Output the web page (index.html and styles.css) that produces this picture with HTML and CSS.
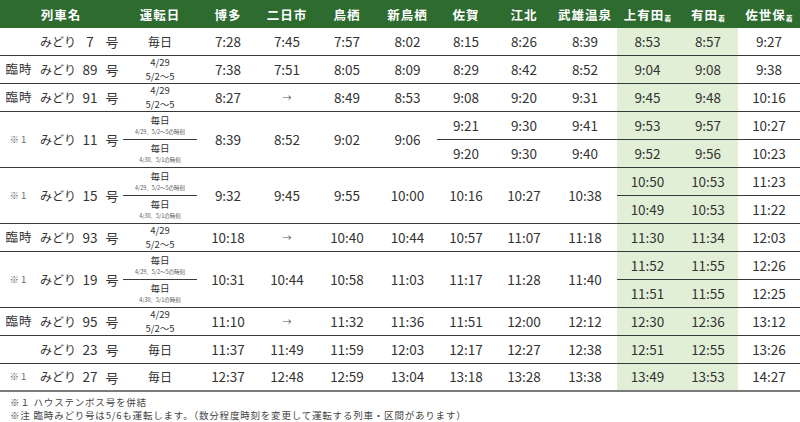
FILE: index.html
```html
<!DOCTYPE html>
<html lang="ja">
<head>
<meta charset="utf-8">
<title>みどり号 時刻表</title>
<link rel="stylesheet" href="styles.css">
</head>
<body>
<div class="tt">
  <div class="h">列車名</div>
  <div class="h">運転日</div>
  <div class="h">博多</div>
  <div class="h">二日市</div>
  <div class="h">鳥栖</div>
  <div class="h">新鳥栖</div>
  <div class="h">佐賀</div>
  <div class="h">江北</div>
  <div class="h">武雄温泉</div>
  <div class="h">上有田<small>着</small></div>
  <div class="h">有田<small>着</small></div>
  <div class="h">佐世保<small>着</small></div>

  <!-- 7 -->
  <div class="c nm"><span class="pf"></span><span class="md">みどり</span><span class="no">7</span><span class="go">号</span></div>
  <div class="c day">毎日</div>
  <div class="c">7:28</div><div class="c">7:45</div><div class="c">7:57</div><div class="c">8:02</div><div class="c">8:15</div><div class="c">8:26</div><div class="c">8:39</div><div class="c g">8:53</div><div class="c g">8:57</div><div class="c">9:27</div>

  <!-- 89 -->
  <div class="c nm"><span class="pf">臨時</span><span class="md">みどり</span><span class="no">89</span><span class="go">号</span></div>
  <div class="c day two"><span>4/29</span><span>5/2～5</span></div>
  <div class="c">7:38</div><div class="c">7:51</div><div class="c">8:05</div><div class="c">8:09</div><div class="c">8:29</div><div class="c">8:42</div><div class="c">8:52</div><div class="c g">9:04</div><div class="c g">9:08</div><div class="c">9:38</div>

  <!-- 91 -->
  <div class="c nm"><span class="pf">臨時</span><span class="md">みどり</span><span class="no">91</span><span class="go">号</span></div>
  <div class="c day two"><span>4/29</span><span>5/2～5</span></div>
  <div class="c">8:27</div><div class="c ar">→</div><div class="c">8:49</div><div class="c">8:53</div><div class="c">9:08</div><div class="c">9:20</div><div class="c">9:31</div><div class="c g">9:45</div><div class="c g">9:48</div><div class="c">10:16</div>

  <!-- 11 -->
  <div class="c nm s2"><span class="pf note">※1</span><span class="md">みどり</span><span class="no">11</span><span class="go">号</span></div>
  <div class="c day s2 frac"><div class="fh"><span>毎日</span><span class="tiny">4/29、5/2～5の時刻</span></div><div class="fh"><span>毎日</span><span class="tiny">4/30、5/1の時刻</span></div></div>
  <div class="c s2">8:39</div><div class="c s2">8:52</div><div class="c s2">9:02</div><div class="c s2">9:06</div>
  <div class="c">9:21</div><div class="c">9:30</div><div class="c">9:41</div><div class="c g">9:53</div><div class="c g">9:57</div><div class="c">10:27</div>
  <div class="c">9:20</div><div class="c">9:30</div><div class="c">9:40</div><div class="c g">9:52</div><div class="c g">9:56</div><div class="c">10:23</div>

  <!-- 15 -->
  <div class="c nm s2"><span class="pf note">※1</span><span class="md">みどり</span><span class="no">15</span><span class="go">号</span></div>
  <div class="c day s2 frac"><div class="fh"><span>毎日</span><span class="tiny">4/29、5/2～5の時刻</span></div><div class="fh"><span>毎日</span><span class="tiny">4/30、5/1の時刻</span></div></div>
  <div class="c s2">9:32</div><div class="c s2">9:45</div><div class="c s2">9:55</div><div class="c s2">10:00</div><div class="c s2">10:16</div><div class="c s2">10:27</div><div class="c s2">10:38</div>
  <div class="c g">10:50</div><div class="c g">10:53</div><div class="c">11:23</div>
  <div class="c g">10:49</div><div class="c g">10:53</div><div class="c">11:22</div>

  <!-- 93 -->
  <div class="c nm"><span class="pf">臨時</span><span class="md">みどり</span><span class="no">93</span><span class="go">号</span></div>
  <div class="c day two"><span>4/29</span><span>5/2～5</span></div>
  <div class="c">10:18</div><div class="c ar">→</div><div class="c">10:40</div><div class="c">10:44</div><div class="c">10:57</div><div class="c">11:07</div><div class="c">11:18</div><div class="c g">11:30</div><div class="c g">11:34</div><div class="c">12:03</div>

  <!-- 19 -->
  <div class="c nm s2"><span class="pf note">※1</span><span class="md">みどり</span><span class="no">19</span><span class="go">号</span></div>
  <div class="c day s2 frac"><div class="fh"><span>毎日</span><span class="tiny">4/29、5/2～5の時刻</span></div><div class="fh"><span>毎日</span><span class="tiny">4/30、5/1の時刻</span></div></div>
  <div class="c s2">10:31</div><div class="c s2">10:44</div><div class="c s2">10:58</div><div class="c s2">11:03</div><div class="c s2">11:17</div><div class="c s2">11:28</div><div class="c s2">11:40</div>
  <div class="c g">11:52</div><div class="c g">11:55</div><div class="c">12:26</div>
  <div class="c g">11:51</div><div class="c g">11:55</div><div class="c">12:25</div>

  <!-- 95 -->
  <div class="c nm"><span class="pf">臨時</span><span class="md">みどり</span><span class="no">95</span><span class="go">号</span></div>
  <div class="c day two"><span>4/29</span><span>5/2～5</span></div>
  <div class="c">11:10</div><div class="c ar">→</div><div class="c">11:32</div><div class="c">11:36</div><div class="c">11:51</div><div class="c">12:00</div><div class="c">12:12</div><div class="c g">12:30</div><div class="c g">12:36</div><div class="c">13:12</div>

  <!-- 23 -->
  <div class="c nm"><span class="pf"></span><span class="md">みどり</span><span class="no">23</span><span class="go">号</span></div>
  <div class="c day">毎日</div>
  <div class="c">11:37</div><div class="c">11:49</div><div class="c">11:59</div><div class="c">12:03</div><div class="c">12:17</div><div class="c">12:27</div><div class="c">12:38</div><div class="c g">12:51</div><div class="c g">12:55</div><div class="c">13:26</div>

  <!-- 27 -->
  <div class="c nm last"><span class="pf note">※1</span><span class="md">みどり</span><span class="no">27</span><span class="go">号</span></div>
  <div class="c day last">毎日</div>
  <div class="c last">12:37</div><div class="c last">12:48</div><div class="c last">12:59</div><div class="c last">13:04</div><div class="c last">13:18</div><div class="c last">13:28</div><div class="c last">13:38</div><div class="c g last">13:49</div><div class="c g last">13:53</div><div class="c last">14:27</div>
</div>
<div class="notes">
  <p>※１ ハウステンボス号を併結</p>
  <p>※注 臨時みどり号は5/6も運転します。（数分程度時刻を変更して運転する列車・区間があります）</p>
</div>
</body>
</html>
```

FILE: styles.css
```css
html, body {
  margin: 0;
  padding: 0;
  background: #ffffff;
}
body {
  width: 800px;
  height: 422px;
  overflow: hidden;
  font-family: "Noto Sans CJK JP", "Noto Sans", sans-serif;
  color: #333333;
}
.tt {
  display: grid;
  grid-template-columns: 122px 76px 60px 58px 62px 59px 58px 58px 64px 61px 60px 62px;
  grid-auto-rows: 28px;
}
.h {
  background: #2d6b2f;
  color: #ffffff;
  font-weight: 700;
  font-size: 12.5px;
  letter-spacing: 1px;
  display: flex;
  align-items: center;
  justify-content: center;
}
.h small {
  font-size: 7px;
  letter-spacing: 0;
  align-self: center;
  margin-top: 8px;
}
.c {
  box-sizing: border-box;
  border-bottom: 1.5px solid #3a3a3a;
  display: flex;
  align-items: center;
  justify-content: center;
  font-size: 13.5px;
  line-height: 1;
  white-space: nowrap;
}
.c.last {
  border-bottom: 2.5px solid #7a7a7a;
}
.g {
  background: #e1efd6;
}
.s2 {
  grid-row: span 2;
}
.ar {
  font-size: 9px;
  color: #555555;
}
.nm {
  justify-content: flex-start;
  font-size: 13px;
}
.nm span {
  flex: none;
  white-space: nowrap;
}
.nm .pf {
  width: 38px;
  text-align: center;
  font-size: 12.5px;
  letter-spacing: 1px;
}
.nm .pf.note {
  font-size: 9.5px;
  color: #666666;
  letter-spacing: 2px;
}
.nm .md {
  width: 40px;
  padding-left: 2px;
  box-sizing: border-box;
  font-size: 12px;
  letter-spacing: 0;
}
.nm .no {
  width: 24px;
  text-align: center;
  font-size: 13.5px;
}
.nm .go {
  width: 20px;
  text-align: center;
}
.day {
  font-size: 12px;
}
.day.two {
  flex-direction: column;
  justify-content: space-between;
  font-size: 9.5px;
  padding: 2px 0 2px;
}
.frac {
  flex-direction: column;
  align-items: stretch;
  justify-content: center;
  padding: 0 1px;
}
.fh {
  flex: 1;
  display: flex;
  flex-direction: column;
  align-items: center;
  justify-content: center;
  font-size: 9.5px;
  gap: 4px;
}
.fh:first-child {
  border-bottom: 1.5px solid #3a3a3a;
}
.tiny {
  font-size: 5.5px;
  color: #555555;
}
.notes {
  padding: 4px 0 0 10px;
  font-size: 9.5px;
  color: #444444;
  letter-spacing: 0.8px;
}
.notes p {
  margin: 0;
  line-height: 13px;
}
```
